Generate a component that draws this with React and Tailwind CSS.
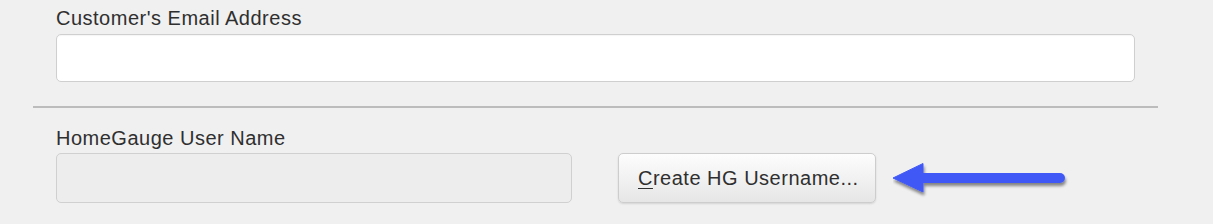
import React from 'react'

const font = { fontFamily: '"Liberation Sans", Arial, sans-serif' }

function Arrow() {
  return (
    <svg width="180" height="44" viewBox="0 0 180 44" className="block">
      <defs>
        <filter id="arrowShadow" x="-10%" y="-40%" width="120%" height="180%">
          <feGaussianBlur in="SourceAlpha" stdDeviation="1.6" />
          <feOffset dx="1" dy="3" result="b" />
          <feComponentTransfer>
            <feFuncA type="linear" slope="0.45" />
          </feComponentTransfer>
          <feMerge>
            <feMergeNode />
            <feMergeNode in="SourceGraphic" />
          </feMerge>
        </filter>
      </defs>
      <g filter="url(#arrowShadow)" fill="#4159f6" stroke="#4159f6">
        <line x1="26" y1="20" x2="167" y2="20" strokeWidth="10" strokeLinecap="round" />
        <path d="M0 20 L30 5.5 L30 34 Z" strokeWidth="1" strokeLinejoin="round" />
      </g>
    </svg>
  )
}

export default function App() {
  return (
    <div className="w-[1213px] h-[224px] overflow-hidden bg-[#f0f0f0] text-[#2f2f2f]" style={font}>
      <div className="pl-[56px] pt-[7px]">
        <div className="text-[20px] leading-[22px] tracking-[0.5px]">Customer's Email Address</div>
        <div className="mt-[5px] w-[1079px] h-[48px] rounded-[5px] border border-[#cfcfcf] bg-white shadow-[inset_0_1px_1px_rgba(0,0,0,0.04)]" />
      </div>

      <div className="ml-[33px] mt-[24px] w-[1125px] h-[2px] bg-[#bcbcbc]" />

      <div className="pl-[56px] mt-[19px]">
        <div className="text-[20px] leading-[22px] tracking-[0.5px]">HomeGauge User Name</div>
        <div className="mt-[4px] flex items-center">
          <div className="w-[516px] h-[50px] rounded-[5px] border border-[#d0d0d0] bg-[#ededed]" />
          <button className="ml-[46px] w-[258px] h-[50px] rounded-[5px] border border-[#cdcdcd] bg-gradient-to-b from-[#fdfdfd] to-[#e6e6e6] shadow-[0_1px_2px_rgba(0,0,0,0.12)] text-left pl-[19px] text-[20px] tracking-[0.5px] text-[#2f2f2f]">
            <span className="underline underline-offset-[3px] decoration-1">C</span>reate HG Username...
          </button>
          <div className="ml-[17px] mt-[4px]">
            <Arrow />
          </div>
        </div>
      </div>
    </div>
  )
}
